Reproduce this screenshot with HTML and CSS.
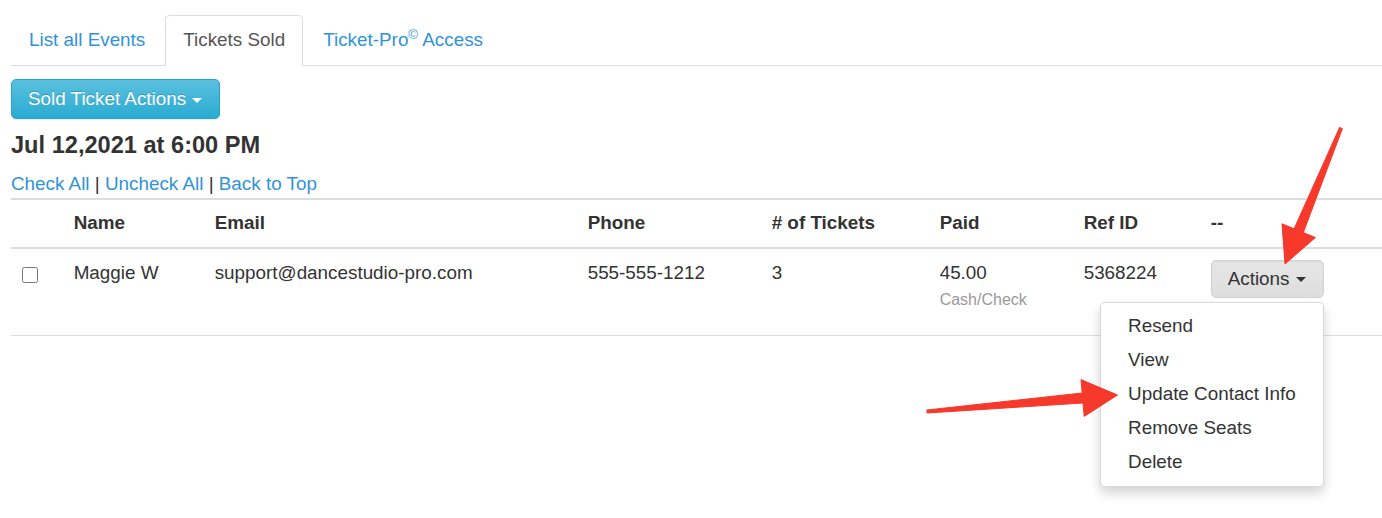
FILE: index.html
```html
<!DOCTYPE html>
<html lang="en">
<head>
  <meta charset="UTF-8" />
  <title>Tickets Sold</title>
  <link rel="stylesheet" href="styles.css">
</head>
<body>
  <div class="page">

    <!-- Tabs -->
    <ul class="nav-tabs">
      <li><a href="#">List all Events</a></li>
      <li class="active"><a href="#">Tickets Sold</a></li>
      <li><a href="#">Ticket-Pro<sup>©</sup> Access</a></li>
    </ul>

    <div class="toolbar">
      <button class="btn btn-info">Sold Ticket Actions <span class="caret"></span></button>
    </div>

    <h4 class="event-date">Jul 12,2021 at 6:00 PM</h4>

    <div class="bulk-links">
      <a href="#">Check All</a> | <a href="#">Uncheck All</a> | <a href="#">Back to Top</a>
    </div>

    <table class="tickets">
      <colgroup>
        <col style="width: 52px">
        <col style="width: 141px">
        <col style="width: 373px">
        <col style="width: 184px">
        <col style="width: 168px">
        <col style="width: 144px">
        <col style="width: 127px">
        <col>
      </colgroup>
      <thead>
        <tr>
          <th></th>
          <th>Name</th>
          <th>Email</th>
          <th>Phone</th>
          <th># of Tickets</th>
          <th>Paid</th>
          <th>Ref ID</th>
          <th>--</th>
        </tr>
      </thead>
      <tbody>
        <tr>
          <td><input type="checkbox" class="row-check"></td>
          <td>Maggie W</td>
          <td>support@dancestudio-pro.com</td>
          <td>555-555-1212</td>
          <td>3</td>
          <td>45.00<br><small class="muted">Cash/Check</small></td>
          <td>5368224</td>
          <td>
            <div class="btn-group">
              <button class="btn btn-default">Actions <span class="caret"></span></button>
              <ul class="dropdown-menu">
                <li><a href="#">Resend</a></li>
                <li><a href="#">View</a></li>
                <li><a href="#">Update Contact Info</a></li>
                <li><a href="#">Remove Seats</a></li>
                <li><a href="#">Delete</a></li>
              </ul>
            </div>
          </td>
        </tr>
      </tbody>
    </table>

    <!-- annotation arrows drawn over the screenshot -->
    <svg class="annotations" width="1382" height="518" viewBox="0 0 1382 518">
      <polygon points="1339.6,127.4 1342.4,128.6 1303.3,232.6 1315.4,237.6 1285,264 1282,223.8 1294.1,228.8" />
      <polygon points="926.9,410 1082.2,393 1081,379.6 1117.5,395 1084.2,416.4 1083,403 927.1,413" />
    </svg>
  </div>
</body>
</html>
```

FILE: styles.css
```css
body {
  margin: 0;
  font-family: "Liberation Sans", Arial, sans-serif;
  font-size: 18.85px;
  line-height: 26.67px;
  color: #333;
  background: #fff;
}

a {
  color: #3193d7;
  text-decoration: none;
}

.page {
  position: relative;
  padding: 15px 0 0 11px;
  height: 503px;
  overflow: hidden;
}

/* tabs */
.nav-tabs {
  list-style: none;
  margin: 0;
  padding: 0;
  display: flex;
  border-bottom: 1px solid #ddd;
}

.nav-tabs li {
  margin: 0 2px -1px 0;
}

.nav-tabs a {
  display: block;
  padding: 11px 17px 12px;
  line-height: 26px;
  border: 1px solid transparent;
  border-radius: 5px 5px 0 0;
}

.nav-tabs .active a {
  color: #555;
  background: #fff;
  border-color: #ddd #ddd transparent;
}

.nav-tabs sup {
  font-size: 70%;
  line-height: 0;
  vertical-align: 7px;
}

/* buttons */
.toolbar {
  margin-top: 13px;
}

.btn {
  font-family: inherit;
  font-size: 18.85px;
  line-height: 26px;
  border-radius: 5px;
  cursor: pointer;
  margin: 0;
}

.btn-info {
  color: #fff;
  padding: 6px 17px 6px 16px;
  background: linear-gradient(#5bc0de, #2aabd2);
  border: 1px solid #28a4c9;
  text-shadow: 0 -1px 0 rgba(0, 0, 0, .2);
  box-shadow: 0 1px 1px rgba(0, 0, 0, .075);
}

.btn-default {
  color: #333;
  padding: 5px 17px 5px 16px;
  background: linear-gradient(#e6e6e6, #dedede);
  border: 1px solid #d3d3d3;
  box-shadow: inset 0 1px 2px rgba(0, 0, 0, .05);
}

.caret {
  display: inline-block;
  width: 0;
  height: 0;
  margin-left: 1px;
  vertical-align: middle;
  border-top: 5px solid;
  border-left: 5px solid transparent;
  border-right: 5px solid transparent;
}

.event-date {
  margin: 13px 0 13px;
  font-size: 23.6px;
  line-height: 26.4px;
  font-weight: bold;
}

.bulk-links {
  line-height: 26.67px;
}

/* table */
.tickets {
  width: 1371px;
  table-layout: fixed;
  border-collapse: collapse;
  border-top: 2px solid #ddd;
}

.tickets th,
.tickets td {
  text-align: left;
  vertical-align: top;
  padding: 10px 10.67px;
  white-space: nowrap;
}

.tickets th {
  border-bottom: 2px solid #ddd;
}

.tickets td {
  padding: 11px 10.67px 21px;
  border-bottom: 1px solid #ddd;
}

.row-check {
  display: block;
  width: 16px;
  height: 16px;
  margin: 7px 0 0;
}

.muted {
  font-size: 16px;
  color: #999;
}

/* dropdown */
.btn-group {
  position: relative;
  display: inline-block;
}

.dropdown-menu {
  position: absolute;
  top: 100%;
  right: 0;
  margin: 4px 0 0;
  padding: 6.67px 0;
  list-style: none;
  background: #fff;
  border: 1px solid rgba(0, 0, 0, .15);
  border-radius: 5px;
  box-shadow: 0 6px 12px rgba(0, 0, 0, .175);
  z-index: 5;
}

.dropdown-menu a {
  display: block;
  padding: 3.67px 27px 3.66px;
  line-height: 26.67px;
  color: #333;
  white-space: nowrap;
}

.annotations {
  position: absolute;
  top: 0;
  left: 0;
  pointer-events: none;
  z-index: 10;
}

.annotations polygon {
  fill: #f6392b;
  stroke: #f6392b;
  stroke-width: 1;
  stroke-linejoin: round;
}
```
